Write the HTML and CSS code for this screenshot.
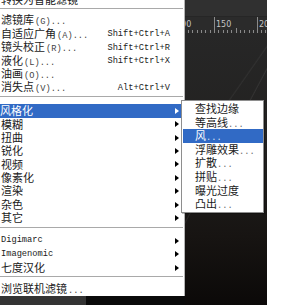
FILE: index.html
```html
<!DOCTYPE html>
<html lang="zh">
<head>
<meta charset="utf-8">
<title>滤镜菜单</title>
<link rel="stylesheet" href="styles.css">
</head>
<body>
  <div class="left">
    <div class="menu">
      <div class="item partial"><span class="label">转换为智能滤镜</span><span></span><span></span></div>
      <div class="sep sep1"></div>
      <div class="item"><span class="label">滤镜库<span class="acc">(G)...</span></span><span></span><span></span></div>
      <div class="item"><span class="label">自适应广角<span class="acc">(A)...</span></span><span class="key">Shift+Ctrl+A</span><span></span></div>
      <div class="item"><span class="label">镜头校正<span class="acc">(R)...</span></span><span class="key">Shift+Ctrl+R</span><span></span></div>
      <div class="item"><span class="label">液化<span class="acc">(L)...</span></span><span class="key">Shift+Ctrl+X</span><span></span></div>
      <div class="item"><span class="label">油画<span class="acc">(O)...</span></span><span></span><span></span></div>
      <div class="item"><span class="label">消失点<span class="acc">(V)...</span></span><span class="key">Alt+Ctrl+V</span><span></span></div>
      <div class="sep sep2"></div>
      <div class="item on"><span class="label">风格化</span><span></span><span class="arrow"></span></div>
      <div class="item"><span class="label">模糊</span><span></span><span class="arrow"></span></div>
      <div class="item"><span class="label">扭曲</span><span></span><span class="arrow"></span></div>
      <div class="item"><span class="label">锐化</span><span></span><span class="arrow"></span></div>
      <div class="item"><span class="label">视频</span><span></span><span class="arrow"></span></div>
      <div class="item"><span class="label">像素化</span><span></span><span class="arrow"></span></div>
      <div class="item"><span class="label">渲染</span><span></span><span class="arrow"></span></div>
      <div class="item"><span class="label">杂色</span><span></span><span class="arrow"></span></div>
      <div class="item"><span class="label">其它</span><span></span><span class="arrow"></span></div>
      <div class="sep sep3"></div>
      <div class="item"><span class="label latin">Digimarc</span><span></span><span class="arrow"></span></div>
      <div class="item"><span class="label latin">Imagenomic</span><span></span><span class="arrow"></span></div>
      <div class="item"><span class="label">七度汉化</span><span></span><span class="arrow"></span></div>
      <div class="sep sep4"></div>
      <div class="item"><span class="label">浏览联机滤镜<span class="acc">...</span></span><span></span><span></span></div>
    </div>
    <div class="taskbar"><div class="tb-a"></div><div class="tb-b"></div></div>
  </div>

  <div class="work">
    <div class="optbar"></div>
    <svg class="ruler" width="82" height="16" viewBox="0 0 82 16">
      <rect width="82" height="16" fill="#2b2b2b"/>
      <g stroke="#8a8a8a" stroke-width="1">
        <line x1="29.5" y1="0" x2="29.5" y2="16"/>
        <line x1="72.5" y1="0" x2="72.5" y2="16"/>
        <line x1="3.5" y1="13" x2="3.5" y2="16"/>
        <line x1="7.5" y1="13" x2="7.5" y2="16"/>
        <line x1="12.5" y1="13" x2="12.5" y2="16"/>
        <line x1="16.5" y1="13" x2="16.5" y2="16"/>
        <line x1="20.5" y1="13" x2="20.5" y2="16"/>
        <line x1="25.5" y1="13" x2="25.5" y2="16"/>
        <line x1="33.5" y1="13" x2="33.5" y2="16"/>
        <line x1="38.5" y1="13" x2="38.5" y2="16"/>
        <line x1="42.5" y1="13" x2="42.5" y2="16"/>
        <line x1="46.5" y1="13" x2="46.5" y2="16"/>
        <line x1="51.5" y1="11" x2="51.5" y2="16"/>
        <line x1="55.5" y1="13" x2="55.5" y2="16"/>
        <line x1="59.5" y1="13" x2="59.5" y2="16"/>
        <line x1="64.5" y1="13" x2="64.5" y2="16"/>
        <line x1="68.5" y1="13" x2="68.5" y2="16"/>
        <line x1="76.5" y1="13" x2="76.5" y2="16"/>
        <line x1="80.5" y1="13" x2="80.5" y2="16"/>
      </g>
      <g fill="#c4c4c4" font-family="DejaVu Sans, sans-serif" font-size="8">
        <text x="-9" y="10">100</text>
        <text x="31" y="10">150</text>
        <text x="74" y="10">200</text>
      </g>
    </svg>
    <div class="canvas"></div>
  </div>

  <div class="blank"></div>

  <div class="submenu">
    <div class="sub-item">查找边缘</div>
    <div class="sub-item">等高线<span class="dots">...</span></div>
    <div class="sub-item on">风<span class="dots">...</span></div>
    <div class="sub-item">浮雕效果<span class="dots">...</span></div>
    <div class="sub-item">扩散<span class="dots">...</span></div>
    <div class="sub-item">拼贴<span class="dots">...</span></div>
    <div class="sub-item">曝光过度</div>
    <div class="sub-item">凸出<span class="dots">...</span></div>
  </div>
</body>
</html>
```

FILE: styles.css
```css
* { box-sizing: border-box; }
html, body { margin: 0; padding: 0; }
body {
  width: 291px;
  height: 305px;
  overflow: hidden;
  position: relative;
  display: grid;
  grid-template-columns: 185px 82px 24px;
  background: #fff;
  font-family: "Noto Sans CJK SC", sans-serif;
  color: #1a1a1a;
}

/* ---------- main menu ---------- */
.left { display: flex; flex-direction: column; min-height: 0; }
.menu {
  flex: none;
  height: 296px;
  background: #fff;
  border-right: 1px solid #b4b4b4;
  overflow: hidden;
}
.item {
  display: grid;
  grid-template-columns: 1fr auto 14px;
  align-items: center;
  height: 13.4px;
  line-height: 13.4px;
  padding-left: 1px;
  font-size: 11px;
  white-space: nowrap;
}
.item.partial { margin-top: -7px; }
.item.on { background: #316ac5; color: #fff; padding-left: 0; }
.label.latin {
  font-family: "Liberation Mono", monospace;
  font-size: 8.7px;
}
.acc {
  font-family: "Liberation Mono", monospace;
  font-size: 8.7px;
  color: #444;
  margin-left: 1px;
}
.key {
  font-family: "Liberation Mono", monospace;
  font-size: 8.7px;
  color: #222;
}
.arrow {
  width: 0;
  height: 0;
  margin-left: 5px;
  border-left: 4px solid #000;
  border-top: 3.5px solid transparent;
  border-bottom: 3.5px solid transparent;
}
.item.on .arrow { border-left-color: #fff; }

.sep { position: relative; }
.sep::after {
  content: "";
  position: absolute;
  left: 0;
  right: 1px;
  height: 1px;
  background: #a9a9a9;
}
.sep1 { height: 7px; }
.sep1::after { top: 1.6px; }
.sep2 { height: 10.4px; }
.sep2::after { top: 2.5px; }
.sep3 { height: 9.5px; }
.sep3::after { top: 2.2px; }
.sep4 { height: 7.8px; }
.sep4::after { top: 1.5px; }

.taskbar { flex: 1; display: flex; }
.tb-a { width: 86px; background: #333; }
.tb-b { flex: 1; background: #0a0a0a; }

/* ---------- dark workspace ---------- */
.work { display: flex; flex-direction: column; background: #262626; min-height: 0; }
.optbar { flex: none; height: 17px; background: #303030; border-bottom: 1px solid #262626; }
.ruler { display: block; flex: none; }
.canvas {
  flex: 1;
  background:
    linear-gradient(-62deg, transparent 55%, rgba(255,255,255,0.07) 55.4%, transparent 56%),
    linear-gradient(-55deg, transparent 66%, rgba(255,255,255,0.05) 66.4%, transparent 67%),
    linear-gradient(180deg, #272727 0%, #222120 40%, #171412 75%, #0b0908 100%);
}

.blank { background: #fff; }

/* ---------- submenu ---------- */
.submenu {
  position: absolute;
  left: 181px;
  top: 100px;
  width: 83px;
  background: #fff;
  border: 1px solid #8e8e8e;
  padding: 1px 0 1px 1px;
  box-shadow: 1px 1px 0 rgba(0,0,0,0.25);
}
.sub-item {
  height: 13.6px;
  line-height: 13.6px;
  padding-left: 12px;
  font-size: 11px;
  white-space: nowrap;
}
.sub-item.on { background: #316ac5; color: #fff; }
.dots {
  font-family: "Liberation Mono", monospace;
  font-size: 8.7px;
  color: #666;
}
.sub-item.on .dots { color: #dfe6f5; }
```
